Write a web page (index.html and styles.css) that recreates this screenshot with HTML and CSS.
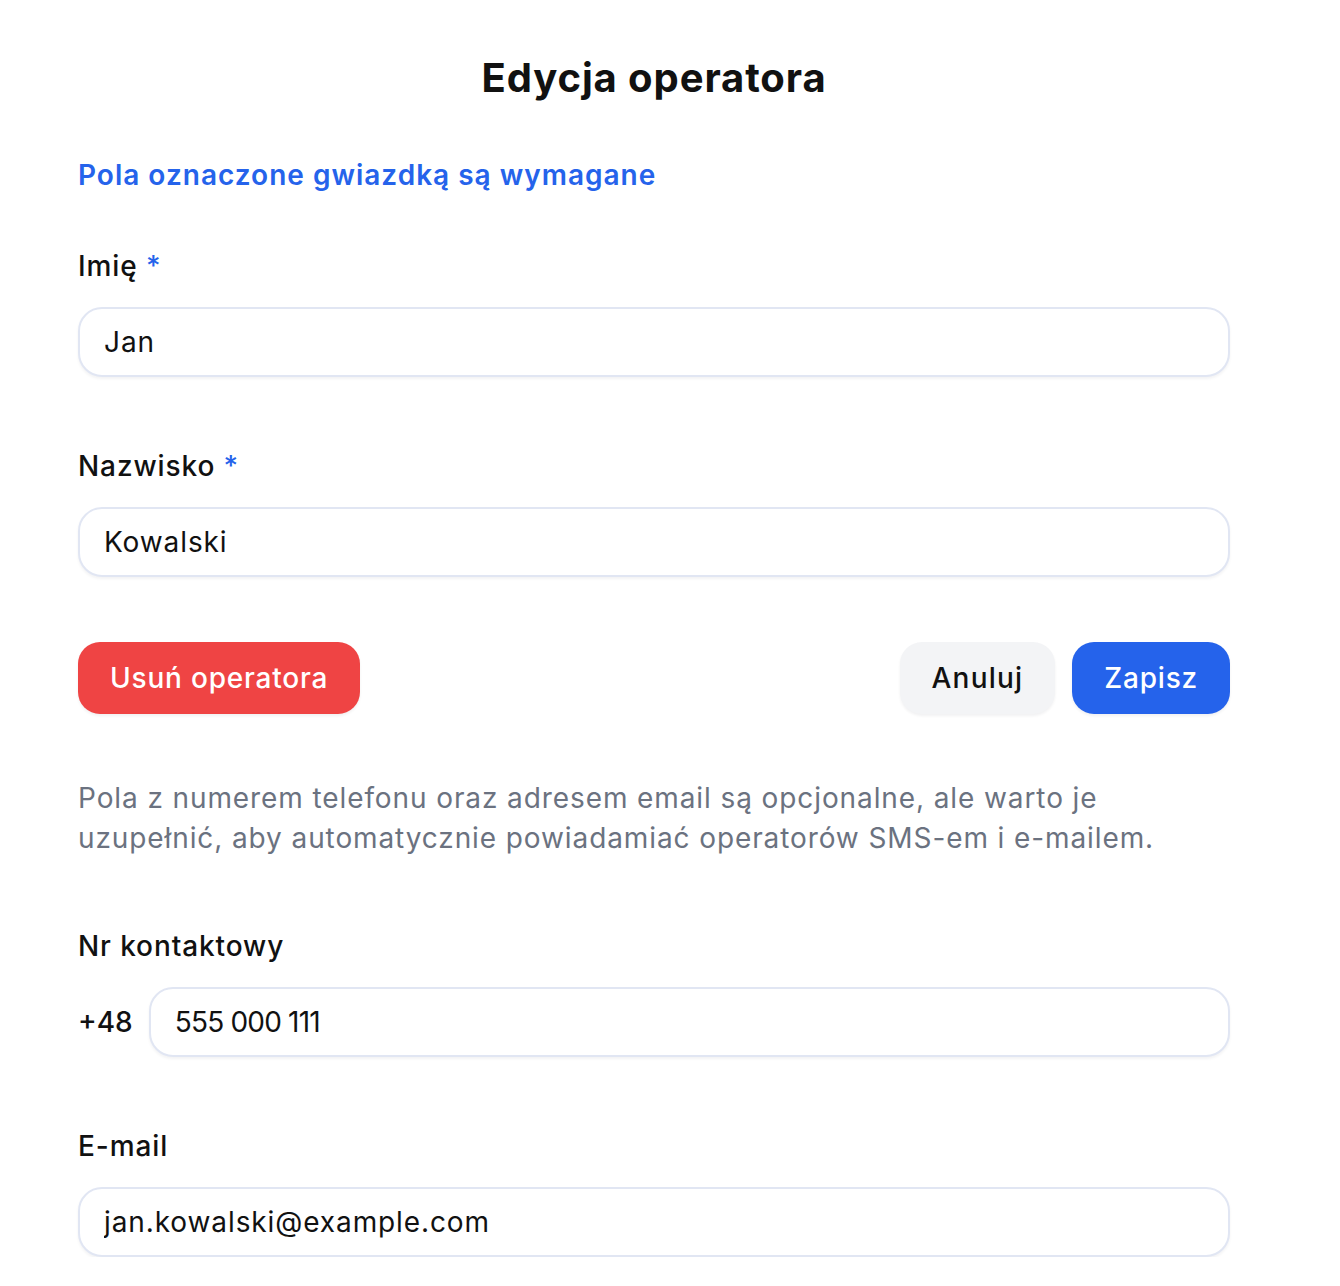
FILE: index.html
```html
<!DOCTYPE html>
<html lang="pl">
<head>
<meta charset="utf-8">
<title>Edycja operatora</title>
<link rel="stylesheet" href="styles.css">
</head>
<body>
<main class="page">
  <h1 class="title">Edycja operatora</h1>
  <p class="required-note">Pola oznaczone gwiazdką są wymagane</p>

  <div class="field">
    <label class="label" for="first">Imię <span class="star">*</span></label>
    <input class="input" id="first" type="text" value="Jan">
  </div>

  <div class="field">
    <label class="label" for="last">Nazwisko <span class="star">*</span></label>
    <input class="input" id="last" type="text" value="Kowalski">
  </div>

  <div class="actions">
    <button class="btn btn-danger" type="button">Usuń operatora</button>
    <div class="actions-right">
      <button class="btn btn-secondary" type="button">Anuluj</button>
      <button class="btn btn-primary" type="button">Zapisz</button>
    </div>
  </div>

  <p class="hint">Pola z numerem telefonu oraz adresem email są opcjonalne, ale warto je uzupełnić, aby automatycznie powiadamiać operatorów SMS-em i e-mailem.</p>

  <div class="field">
    <label class="label" for="phone">Nr kontaktowy</label>
    <div class="phone-row">
      <span class="prefix">+48</span>
      <input class="input input-phone" id="phone" type="text" value="555 000 111">
    </div>
  </div>

  <div class="field">
    <label class="label" for="email">E-mail</label>
    <input class="input" id="email" type="text" value="jan.kowalski@example.com">
  </div>
</main>
</body>
</html>
```

FILE: styles.css
```css
* { box-sizing: border-box; }

html, body {
  margin: 0;
  padding: 0;
  background: #ffffff;
}

body {
  font-family: "Inter", "Open Sans", sans-serif;
  color: #111111;
}

.page {
  width: 1152px;
  margin-left: 78px;
  padding-top: 54px;
}

.title {
  margin: 0;
  text-align: center;
  font-size: 40px;
  line-height: 48px;
  font-weight: 700;
  letter-spacing: 0.9px;
  color: #111111;
}

.required-note {
  margin: 53px 0 0;
  font-size: 28px;
  line-height: 40px;
  font-weight: 600;
  letter-spacing: 1px;
  color: #2563eb;
}

.field {
  margin-top: 51px;
  display: flex;
  flex-direction: column;
}

.field + .field { margin-top: 69px; }

.label {
  font-size: 28px;
  line-height: 40px;
  font-weight: 500;
  letter-spacing: 0.9px;
  color: #111111;
  margin-bottom: 21px;
}

.star { color: #2563eb; }

.input {
  width: 100%;
  height: 70px;
  padding: 0 24px;
  border: 2px solid #e1e6f3;
  border-radius: 24px;
  background: #ffffff;
  font-family: inherit;
  font-size: 28px;
  letter-spacing: 0.9px;
  color: #111111;
  box-shadow: 0 2px 3px rgba(17, 24, 39, 0.05);
  outline: none;
}

.input-phone { letter-spacing: -0.8px; }

.actions {
  margin-top: 65px;
  display: flex;
  justify-content: space-between;
  align-items: center;
}

.actions-right {
  display: flex;
  gap: 17px;
}

.btn {
  height: 72px;
  padding: 0 32px;
  border: none;
  border-radius: 22px;
  font-family: inherit;
  font-size: 28px;
  font-weight: 500;
  letter-spacing: 0.8px;
  box-shadow: 0 2px 3px rgba(17, 24, 39, 0.06);
  cursor: pointer;
}

.btn-danger { background: #ef4444; color: #ffffff; }
.btn-secondary { background: #f3f4f6; color: #111111; letter-spacing: 1.2px; }
.btn-primary { background: #2563eb; color: #ffffff; }

.hint {
  margin: 64px 0 0;
  max-width: 1120px;
  font-size: 28px;
  line-height: 40px;
  letter-spacing: 0.9px;
  color: #6b7280;
}

.hint + .field { margin-top: 68px; }

.phone-row {
  display: flex;
  align-items: center;
  gap: 16px;
}

.prefix {
  font-size: 28px;
  font-weight: 500;
  color: #111111;
  flex: none;
}

.phone-row .input { flex: 1; }
```
